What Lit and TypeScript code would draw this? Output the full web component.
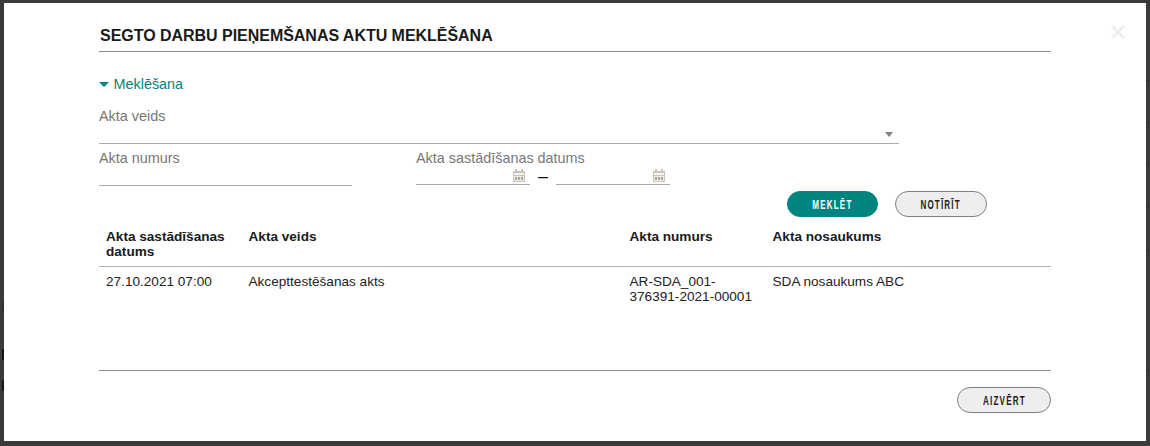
import { LitElement, html, css } from "lit";
import { customElement } from "lit/decorators.js";

const cal = html`<svg class="cal" width="12" height="13" viewBox="0 0 12 13">
  <path fill="#c9c5bb" d="M0 2h2V0h2v2h4V0h2v2h2v11H0z"/>
  <rect x="1" y="4" width="10" height="2" fill="#f7f6f3"/>
  <path fill="#eeece7" d="M1 7h10v5H1z"/>
  <path fill="#a9a59b" d="M2 8h2v3H2zM5 8h2v3H5zM8 8h2v3H8z"/>
</svg>`;

const backdropLines = [80, 122, 164, 206, 250, 370];
const backdropMarks = [
  { top: 301, height: 11, color: "#2d3138" },
  { top: 349, height: 11, color: "#15161a" },
  { top: 380, height: 11, color: "#15161a" },
];

@customElement("app-root")
export class AppRoot extends LitElement {
  static styles = css`
    :host {
      display: block;
      width: 1150px;
      height: 446px;
      background: #3a3a3a;
      font-family: "Liberation Sans", Arial, sans-serif;
      overflow: hidden;
      box-sizing: border-box;
      padding: 3px 4px 5px;
      position: relative;
    }
    .bline {
      position: absolute;
      left: 0;
      width: 100%;
      height: 1px;
      background: #323232;
    }
    .bmark {
      position: absolute;
      left: 2px;
      width: 2px;
    }
    .modal {
      background: #fff;
      height: 438px;
      padding: 0 95px;
      position: relative;
      box-sizing: border-box;
      display: flex;
      flex-direction: column;
    }
    .close {
      position: absolute;
      left: 1106px;
      top: 21px;
    }
    h1 {
      margin: 0;
      height: 49px;
      box-sizing: border-box;
      padding: 23px 0 0 1px;
      font-size: 16px;
      line-height: 20px;
      font-weight: 700;
      letter-spacing: -0.03px;
      color: #1a1a1a;
      border-bottom: 1px solid #8c8c8c;
    }
    .toggle {
      margin-top: 23px;
      height: 18px;
      display: flex;
      align-items: center;
      gap: 5px;
      font-size: 14.4px;
      line-height: 18px;
      color: #00847f;
    }
    .tri {
      width: 0;
      height: 0;
      border-left: 5px solid transparent;
      border-right: 5px solid transparent;
      border-top: 5px solid #00847f;
      margin-left: -0.5px;
    }
    .label {
      font-size: 14.4px;
      line-height: 16px;
      height: 17px;
      color: #777;
    }
    .veids {
      margin-top: 15px;
      width: 800px;
      height: 35px;
      border-bottom: 1px solid #aaa;
      position: relative;
    }
    .arrow {
      position: absolute;
      right: 6px;
      top: 24px;
      width: 0;
      height: 0;
      border-left: 4.5px solid transparent;
      border-right: 4.5px solid transparent;
      border-top: 5px solid #808080;
    }
    .row2 {
      display: flex;
      margin-top: 6px;
    }
    .numurs {
      width: 253px;
      height: 35px;
      border-bottom: 1px solid #aaa;
    }
    .datums {
      margin-left: 64px;
    }
    .dates {
      display: flex;
      align-items: flex-end;
      height: 18px;
    }
    .date {
      width: 114px;
      height: 17px;
      border-bottom: 1px solid #aaa;
      display: flex;
      justify-content: flex-end;
      align-items: flex-start;
    }
    .cal {
      margin-right: 5px;
      margin-top: 2px;
    }
    .dash {
      width: 26px;
      text-align: center;
      font-size: 18px;
      line-height: 18px;
      color: #111;
      align-self: flex-start;
    }
    .actions {
      display: flex;
      justify-content: flex-end;
      gap: 17px;
      margin-top: 5px;
      padding-right: 64px;
    }
    .btn {
      height: 26px;
      width: 92px;
      box-sizing: border-box;
      border-radius: 13px;
      border: 1px solid #808080;
      background: #eee;
      color: #1c1c2a;
      display: flex;
      align-items: center;
      justify-content: center;
    }
    .btn span {
      font-weight: 700;
      font-size: 13px;
      letter-spacing: 1.9px;
      transform: scaleX(0.62);
      white-space: nowrap;
    }
    .btn.primary {
      width: 91px;
      background: #00847f;
      border-color: #00847f;
      color: #fff;
    }
    table {
      border-collapse: collapse;
      table-layout: fixed;
      width: 952px;
      font-size: 13.6px;
      line-height: 15px;
      color: #222;
      margin-top: 2px;
    }
    th {
      text-align: left;
      font-weight: 700;
      padding: 10px 7px 7px;
      vertical-align: top;
      border-bottom: 1px solid #b0b0b0;
      color: #1a1a1a;
    }
    td {
      padding: 7px 7px 0;
      vertical-align: top;
    }
    .col-date { width: 142.5px; }
    .col-type { width: 381px; }
    .col-num { width: 143px; }
    .foot {
      margin-top: auto;
      margin-bottom: 28px;
      border-top: 1px solid #8c8c8c;
      display: flex;
      justify-content: flex-end;
      padding-top: 16px;
    }
    .foot .btn {
      width: 94px;
    }
  `;

  render() {
    return html`
      ${backdropLines.map((y) => html`<div class="bline" style="top:${y}px"></div>`)}
      ${backdropMarks.map(
        (m) => html`<div class="bmark" style="top:${m.top}px;height:${m.height}px;background:${m.color}"></div>`
      )}
      <div class="modal">
        <svg class="close" width="16" height="16" viewBox="0 0 16 16"><path d="M2 2l12 12M14 2L2 14" stroke="#eeeeee" stroke-width="3"/></svg>
        <h1>SEGTO DARBU PIEŅEMŠANAS AKTU MEKLĒŠANA</h1>
        <div class="toggle"><span class="tri"></span><span>Meklēšana</span></div>
        <div class="veids"><div class="label">Akta veids</div><span class="arrow"></span></div>
        <div class="row2">
          <div class="numurs"><div class="label">Akta numurs</div></div>
          <div class="datums">
            <div class="label">Akta sastādīšanas datums</div>
            <div class="dates">
              <div class="date">${cal}</div>
              <div class="dash">–</div>
              <div class="date">${cal}</div>
            </div>
          </div>
        </div>
        <div class="actions">
          <div class="btn primary"><span>MEKLĒT</span></div>
          <div class="btn"><span>NOTĪRĪT</span></div>
        </div>
        <table>
          <colgroup><col class="col-date"/><col class="col-type"/><col class="col-num"/><col/></colgroup>
          <thead><tr><th>Akta sastādīšanas datums</th><th>Akta veids</th><th>Akta numurs</th><th>Akta nosaukums</th></tr></thead>
          <tbody><tr><td>27.10.2021 07:00</td><td>Akcepttestēšanas akts</td><td>AR-SDA_001-376391-2021-00001</td><td>SDA nosaukums ABC</td></tr></tbody>
        </table>
        <div class="foot"><div class="btn"><span>AIZVĒRT</span></div></div>
      </div>`;
  }
}
